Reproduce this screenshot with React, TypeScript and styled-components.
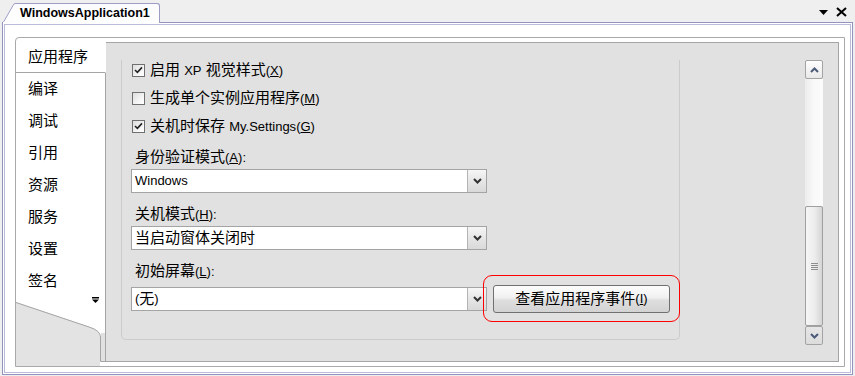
import React from "react";
import styled, { createGlobalStyle, css } from "styled-components";

const Global = createGlobalStyle`
  html, body { margin: 0; padding: 0; background: #efefef; }
  body {
    font-family: "Liberation Sans", "Noto Sans CJK SC", sans-serif;
    font-size: 15px;
    color: #000;
  }
  #root { width: 855px; height: 376px; overflow: hidden; }
`;

const Page = styled.div`
  width: 855px;
  height: 376px;
  box-sizing: border-box;
  padding: 0 2px;
  display: flex;
  flex-direction: column;
  background: #efefef;
`;

/* ---------- title row with the document tab ---------- */
const TitleRow = styled.div`
  position: relative;
  z-index: 1;
  display: flex;
  align-items: flex-end;
  padding-top: 3px;
`;

const DocTab = styled.div`
  display: flex;
  height: 20px;
  margin-left: 1px;
`;

const TabCorner = styled.svg`
  display: block;
  flex: none;
`;

const DocTabLabel = styled.div`
  display: flex;
  align-items: center;
  box-sizing: border-box;
  width: 145px;
  height: 20px;
  padding: 0 0 1px 5px;
  background: linear-gradient(#fbfbfd, #ffffff);
  border-top: 1px solid #9c9cc4;
  border-right: 1px solid #9c9cc4;
  border-top-right-radius: 3px;
  font: bold 12.5px "Liberation Sans", sans-serif;
  white-space: nowrap;
`;

const TitleTools = styled.div`
  margin-left: auto;
  align-self: flex-start;
  margin-top: 4px;
  display: flex;
  align-items: center;
  gap: 8px;
  padding-right: 6px;
  height: 10px;
`;

const ToolIcon = styled.svg`
  display: block;
`;

/* ---------- frame ---------- */
const Frame = styled.div`
  margin-top: -1px;
  box-sizing: border-box;
  height: 353px;
  border: 1px solid #9393bf;
  padding: 1px;
  background: #fff;
`;

const FrameInner = styled.div`
  box-sizing: border-box;
  height: 100%;
  border: 1px solid #babad9;
  padding: 12px 5px 5px 10px;
`;

const Designer = styled.div`
  box-sizing: border-box;
  height: 100%;
  display: flex;
  border: 1px solid #a9a9a9;
  border-top-left-radius: 4px;
  background: #fff;
`;

/* ---------- side tabs ---------- */
const SideTabs = styled.div`
  width: 90px;
  flex: none;
  display: flex;
  flex-direction: column;
  padding-top: 3px;
`;

const SideTab = styled.div<{ $active?: boolean }>`
  box-sizing: border-box;
  height: 32px;
  display: flex;
  align-items: center;
  padding-left: 12px;
  line-height: 20px;
  white-space: nowrap;
  background: #fff;
  border-right: 1px solid #a5a5a5;
  ${(p) =>
    p.$active &&
    css`
      border-right-color: transparent;
      border-bottom: 1px solid #a5a5a5;
    `}
`;

const SideTail = styled.div`
  flex: 1;
  display: flex;
  flex-direction: column;
`;

/* ---------- property page ---------- */
const PropPage = styled.div`
  flex: 1;
  margin: 4px 5px 4px 0;
  box-sizing: border-box;
  display: flex;
  align-items: flex-start;
  padding: 17px 15px 15px 15px;
  background: #e1e1e1;
  border: 1px solid #a5a5a5;
  border-left: none;
`;

const GroupPanel = styled.div`
  box-sizing: border-box;
  width: 559px;
  height: 280px;
  flex: none;
  display: flex;
  flex-direction: column;
  align-items: flex-start;
  padding-left: 9px;
  border: 1px solid #cbcbcb;
  border-top: none;
  border-radius: 0 0 5px 5px;
`;

const CheckRow = styled.label<{ $mt?: number }>`
  display: flex;
  align-items: center;
  gap: 5px;
  height: 20px;
  line-height: 20px;
  margin-left: 1px;
  margin-top: ${(p) => p.$mt ?? 0}px;
  white-space: nowrap;
`;

const CheckBox = styled.span`
  box-sizing: border-box;
  width: 13px;
  height: 13px;
  flex: none;
  display: flex;
  align-items: center;
  justify-content: center;
  border: 1px solid #707070;
  background: linear-gradient(135deg, #dedede, #f8f8f8 70%, #ffffff);
`;

const FieldLabel = styled.div<{ $mt?: number }>`
  height: 20px;
  line-height: 20px;
  padding-left: 4px;
  margin-top: ${(p) => p.$mt ?? 0}px;
  white-space: nowrap;
`;

const ComboBox = styled.div<{ $mt?: number }>`
  box-sizing: border-box;
  width: 356px;
  height: 24px;
  margin-top: ${(p) => p.$mt ?? 0}px;
  display: flex;
  border: 1px solid #a4a4a4;
  background: #fff;
`;

const ComboText = styled.div`
  flex: 1;
  display: flex;
  align-items: center;
  padding-left: 3px;
  line-height: 20px;
  white-space: nowrap;
`;

const DropButton = styled.div`
  width: 18px;
  flex: none;
  display: flex;
  align-items: center;
  justify-content: center;
  border-left: 1px solid #b4b4b4;
  background: linear-gradient(#f6f6f6, #e6e6e6 50%, #d9d9d9);
`;

const ComboRow = styled.div`
  display: flex;
  align-items: center;
  height: 28px;
  margin-top: 4px;
`;

const Highlight = styled.div`
  position: relative;
  margin-left: 6px;
  &::after {
    content: "";
    position: absolute;
    left: -10px;
    right: -10px;
    top: -10px;
    bottom: -9px;
    border: 1px solid #ff0000;
    border-radius: 9px;
    pointer-events: none;
  }
`;

const PushButton = styled.button`
  box-sizing: border-box;
  width: 177px;
  height: 28px;
  padding: 0;
  display: flex;
  align-items: center;
  justify-content: center;
  font: inherit;
  line-height: 20px;
  color: #000;
  border: 1px solid #707070;
  border-radius: 3px;
  background: linear-gradient(#fdfdfd, #f0f0f0 45%, #dedede 55%, #d3d3d3);
  white-space: nowrap;
`;

const Lat = styled.span`
  font-family: "Liberation Sans", sans-serif;
  font-size: 13px;
`;

/* ---------- scrollbar ---------- */
const VScroll = styled.div`
  margin-left: auto;
  width: 18px;
  height: 285px;
  flex: none;
  display: flex;
  flex-direction: column;
`;

const ScrollButton = styled.div<{ $down?: boolean }>`
  box-sizing: border-box;
  height: 19px;
  display: flex;
  align-items: center;
  justify-content: center;
  border: 1px solid #a3a3a3;
  border-radius: 2px;
  background: ${(p) =>
    p.$down
      ? "linear-gradient(#e6e6e6, #dcdcdc)"
      : "linear-gradient(#fefefe, #e9e9e9)"};
`;

const ScrollTrack = styled.div<{ $h: number }>`
  height: ${(p) => p.$h}px;
  background: linear-gradient(to right, #ececec, #f9f9f9 50%, #fbfbfb);
`;

const ScrollThumb = styled.div`
  box-sizing: border-box;
  height: 120px;
  display: flex;
  align-items: center;
  justify-content: center;
  border: 1px solid #a0a0a0;
  border-radius: 2px;
  background: linear-gradient(to right, #f6f6f6, #ececec 55%, #d5d5d5);
`;

const Grip = styled.div`
  width: 7px;
  height: 7px;
  background: repeating-linear-gradient(
    to bottom,
    #8e8e8e 0,
    #8e8e8e 1px,
    transparent 1px,
    transparent 2px
  );
`;

/* ---------- small parts ---------- */
const Mn = ({ k, colon }: { k: string; colon?: boolean }) => (
  <Lat>
    (<u>{k}</u>){colon ? ":" : ""}
  </Lat>
);

const Check = ({ checked }: { checked?: boolean }) => (
  <CheckBox>
    {checked && (
      <svg width="9" height="8" viewBox="0 0 9 8">
        <polyline
          points="1,4 3.4,6.4 8,1.4"
          fill="none"
          stroke="#222"
          strokeWidth="1.6"
        />
      </svg>
    )}
  </CheckBox>
);

const Chevron = ({ up, color }: { up?: boolean; color: string }) => (
  <svg width="9" height="6" viewBox="0 0 9 6">
    <polyline
      points={up ? "1,5 4.5,1.5 8,5" : "1,1 4.5,4.5 8,1"}
      fill="none"
      stroke={color}
      strokeWidth="2"
    />
  </svg>
);

const Combo = ({ children, mt }: { children: React.ReactNode; mt?: number }) => (
  <ComboBox $mt={mt}>
    <ComboText>{children}</ComboText>
    <DropButton>
      <Chevron color="#333" />
    </DropButton>
  </ComboBox>
);

const tabs = ["应用程序", "编译", "调试", "引用", "资源", "服务", "设置", "签名"];

export default function App() {
  return (
    <>
      <Global />
      <Page>
        <TitleRow>
          <DocTab>
            <TabCorner width="12" height="20" viewBox="0 0 12 20">
              <path d="M0 20 L0 18.5 L10 2 Q11 0.5 12 0.5 L12 20 Z" fill="#fdfdfe" />
              <path
                d="M0.5 19 L10 2.5 Q11 0.5 12 0.5"
                fill="none"
                stroke="#9c9cc4"
              />
            </TabCorner>
            <DocTabLabel>WindowsApplication1</DocTabLabel>
          </DocTab>
          <TitleTools>
            <ToolIcon width="9" height="5" viewBox="0 0 9 5">
              <polygon points="0,0 9,0 4.5,5" fill="#000" />
            </ToolIcon>
            <ToolIcon width="11" height="10" viewBox="0 0 11 10">
              <path d="M1 1 L10 9 M10 1 L1 9" stroke="#000" strokeWidth="2" />
            </ToolIcon>
          </TitleTools>
        </TitleRow>

        <Frame>
          <FrameInner>
            <Designer>
              <SideTabs>
                {tabs.map((t, i) => (
                  <SideTab key={t} $active={i === 0}>
                    {t}
                  </SideTab>
                ))}
                <SideTail>
                  <svg width="90" height="69" viewBox="0 0 90 69">
                    <path
                      d="M0 5 L73 29.5 Q84 33 84 40 L84 69 L0 69 Z"
                      fill="#e3e3e3"
                    />
                    <rect x="85" y="36" width="4" height="28" fill="#e1e1e1" />
                    <path
                      d="M0 5.5 L73 30 Q84.5 33.5 84.5 40 L84.5 64.5 L90 64.5"
                      fill="none"
                      stroke="#a5a5a5"
                    />
                    <line x1="89.5" y1="0" x2="89.5" y2="64" stroke="#a5a5a5" />
                    <rect x="76" y="0" width="7" height="1.5" fill="#000" />
                    <polygon points="76,2.5 83,2.5 79.5,6" fill="#000" />
                  </svg>
                </SideTail>
              </SideTabs>

              <PropPage>
                <GroupPanel>
                  <CheckRow>
                    <Check checked />
                    <span>
                      启用 <Lat>XP</Lat> 视觉样式
                      <Mn k="X" />
                    </span>
                  </CheckRow>
                  <CheckRow $mt={8}>
                    <Check />
                    <span>
                      生成单个实例应用程序
                      <Mn k="M" />
                    </span>
                  </CheckRow>
                  <CheckRow $mt={8}>
                    <Check checked />
                    <span>
                      关机时保存 <Lat>My.Settings</Lat>
                      <Mn k="G" />
                    </span>
                  </CheckRow>

                  <FieldLabel $mt={11}>
                    身份验证模式
                    <Mn k="A" colon />
                  </FieldLabel>
                  <Combo mt={2}>
                    <Lat>Windows</Lat>
                  </Combo>

                  <FieldLabel $mt={11}>
                    关机模式
                    <Mn k="H" colon />
                  </FieldLabel>
                  <Combo mt={2}>当启动窗体关闭时</Combo>

                  <FieldLabel $mt={11}>
                    初始屏幕
                    <Mn k="L" colon />
                  </FieldLabel>
                  <ComboRow>
                    <Combo>
                      <Lat>(</Lat>无<Lat>)</Lat>
                    </Combo>
                    <Highlight>
                      <PushButton>
                        查看应用程序事件
                        <Mn k="I" />
                      </PushButton>
                    </Highlight>
                  </ComboRow>
                </GroupPanel>

                <VScroll>
                  <ScrollButton>
                    <Chevron up color="#4b5a78" />
                  </ScrollButton>
                  <ScrollTrack $h={127} />
                  <ScrollThumb>
                    <Grip />
                  </ScrollThumb>
                  <ScrollButton $down>
                    <Chevron color="#4b5a78" />
                  </ScrollButton>
                </VScroll>
              </PropPage>
            </Designer>
          </FrameInner>
        </Frame>
      </Page>
    </>
  );
}
